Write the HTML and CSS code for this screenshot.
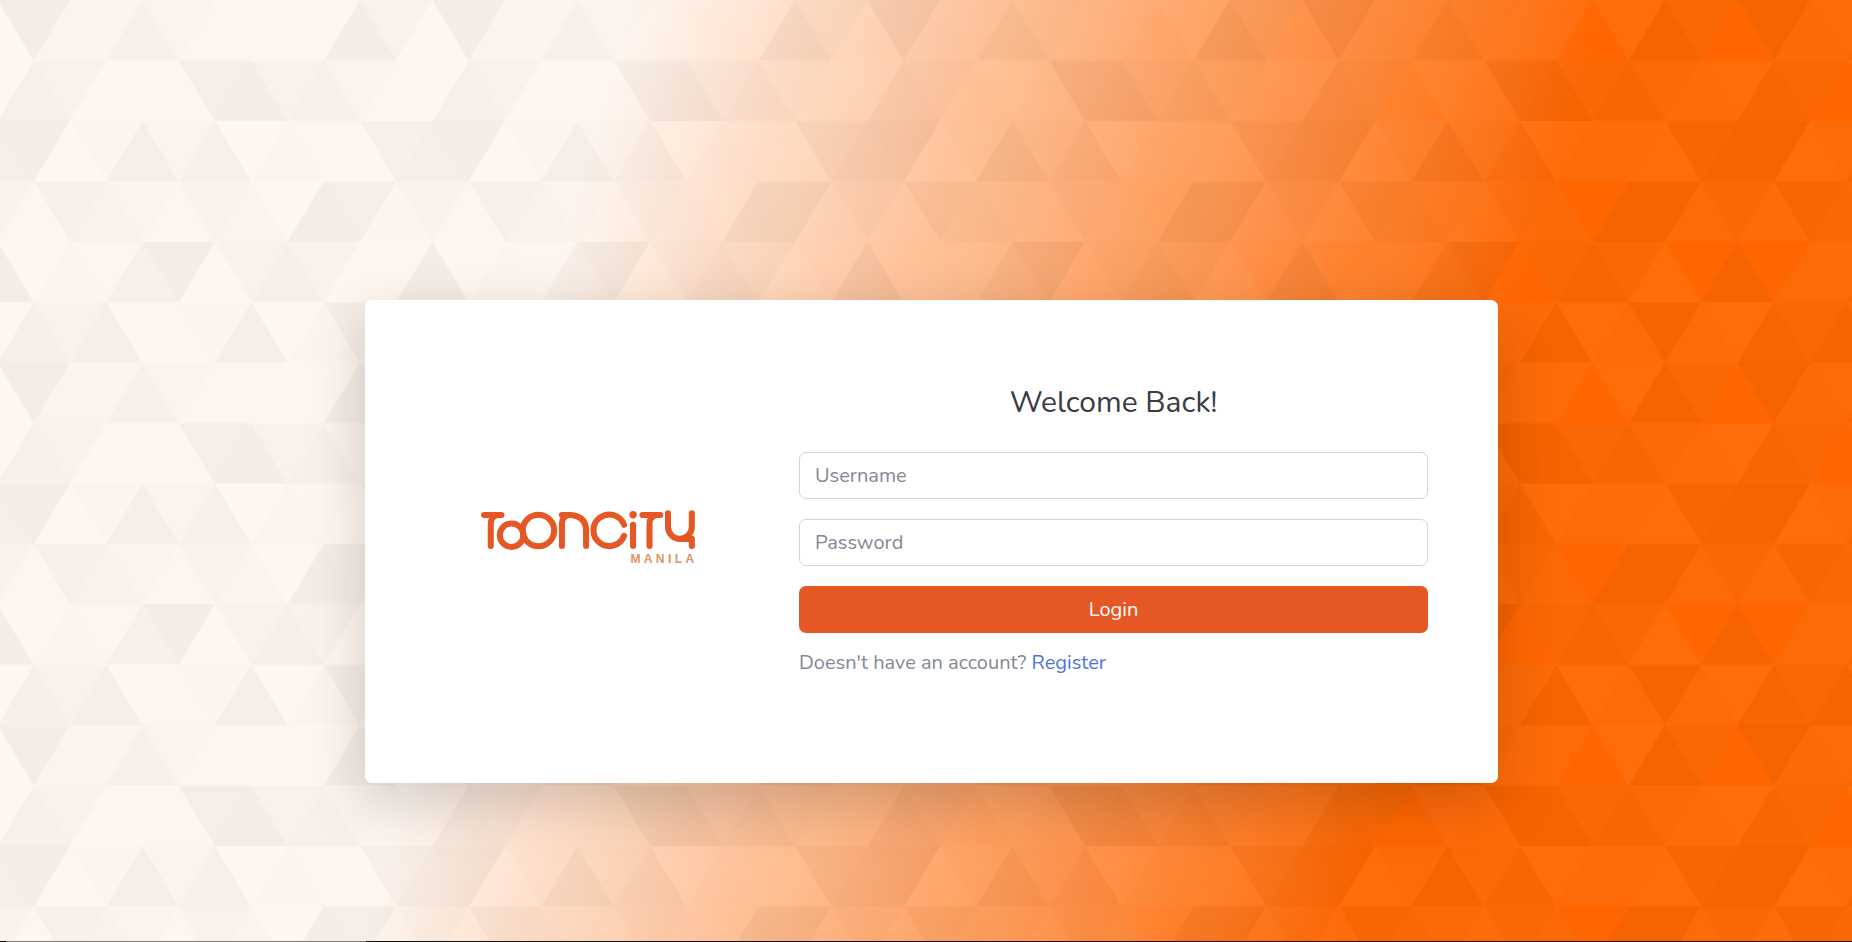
FILE: index.html
```html
<!DOCTYPE html>
<html lang="en">
<head>
<meta charset="utf-8">
<meta name="viewport" content="width=device-width, initial-scale=1">
<title>Tooncity Manila - Login</title>
<link rel="stylesheet" href="styles.css">
</head>
<body>
<svg class="backdrop" aria-hidden="true">
  <defs>
    <pattern id="triangles" x="-2.5" y="0" width="435" height="362.6" patternUnits="userSpaceOnUse"></pattern>
  </defs>
  <rect width="100%" height="100%" fill="url(#triangles)"/>
</svg>
<main class="stage">
  <div class="card">
    <div class="brand">
      <svg class="logo" viewBox="36 32 638 162" role="img" aria-label="Tooncity Manila">
        <g class="logo-lines">
          <path d="M45 47H97M65 139V74Q65 52 84 47"/>
          <circle cx="127" cy="107" r="35"/>
          <circle cx="207" cy="93" r="47"/>
          <path d="M277 47H303Q349 50 349 95V139M277 139V74Q277 54 295 47"/>
          <path d="M462 76A47 47 0 1 0 462 109"/>
          <path d="M489 76V139"/>
          <path d="M517 47H570M538 139V74Q538 52 558 47"/>
          <path d="M593 42V82A36 36 0 0 0 629 118H664V139M629 118A36 36 0 0 0 664 82V42"/>
        </g>
        <circle class="logo-dot" cx="489" cy="46" r="11"/>
        <text class="logo-city" x="481" y="191">MANILA</text>
      </svg>
    </div>
    <form class="login">
      <h1 class="title">Welcome Back!</h1>
      <input class="field" type="text" placeholder="Username" aria-label="Username">
      <input class="field" type="password" placeholder="Password" aria-label="Password">
      <button class="submit" type="submit">Login</button>
      <p class="hint">Doesn't have an account? <a class="link" href="#register">Register</a></p>
    </form>
  </div>
</main>
<div class="baseline"></div>
<script src="pattern.js"></script>
</body>
</html>
```
FILE: pattern.js
```js
// Shade of each triangle, 0 = white to 9 = black, "n" = left empty.
// Every row lists the upward triangles first, then the downward ones.
const rows = [
  ["n361n9", "923105"],
  ["6n1961", "508530"],
  ["808620", "923016"],
  ["151392", "635n85"],
  ["926n70", "n1955n"],
  ["781822", "502080"]
];
const side = 72.5;
const height = 362.6 / 6;
const pattern = document.getElementById("triangles");

function triangle(points, shade) {
  const level = 255 - Math.round(shade * 255 / 9);
  const shape = document.createElementNS("http://www.w3.org/2000/svg", "polygon");
  shape.setAttribute("points", points.join(" "));
  shape.setAttribute("fill", `rgb(${level},${level},${level})`);
  pattern.append(shape);
}

rows.forEach(([up, down], row) => {
  const top = row * height;
  const bottom = top + height;
  const shift = row % 2 ? side / 2 : 0;
  for (let k = -1; k <= 6; k++) {
    const x = k * side + shift;
    const index = (k + 6) % 6;
    if (up[index] !== "n") {
      triangle([x, top, x + side / 2, bottom, x - side / 2, bottom], up[index]);
    }
    if (down[index] !== "n") {
      triangle([x, top, x + side, top, x + side / 2, bottom], down[index]);
    }
  }
});
```
FILE: styles.css
```css
* {
  box-sizing: border-box;
}

body {
  margin: 0;
  min-height: 100vh;
  display: flex;
  flex-direction: column;
  background: linear-gradient(106deg, #fff6ef 30%, #ff6600 76%);
  color: #858796;
  font-family: Nunito, Lato, sans-serif;
  font-size: 20px;
  line-height: 30px;
}

.backdrop {
  position: absolute;
  inset: 0;
  width: 100%;
  height: 100%;
  z-index: -1;
}

.backdrop polygon {
  fill-opacity: 0.04;
}

.stage {
  flex: 1;
  padding: 300px 24px 60px 35px;
}

.card {
  max-width: 1133px;
  margin: 0 auto;
  padding: 85px 70px 105px;
  display: grid;
  grid-template-columns: 306fr 629fr;
  gap: 58px;
  align-items: center;
  background: #fff;
  border-radius: 7px;
  box-shadow: 0 20px 60px rgba(0, 0, 0, 0.175);
}

.brand {
  padding-top: 12px;
  text-align: center;
}

.logo {
  display: block;
  width: 70%;
  margin: 0 auto;
  overflow: visible;
}

.logo-lines {
  fill: none;
  stroke: #e55725;
  stroke-width: 18;
  stroke-linecap: round;
  stroke-linejoin: round;
}

.logo-dot {
  fill: #e55725;
}

.logo-city {
  fill: #dd9468;
  font: bold 36px "Liberation Sans", sans-serif;
  letter-spacing: 10px;
}

.login {
  display: flex;
  flex-direction: column;
  gap: 20px;
}

.title {
  margin: 0 0 11px;
  color: #3a3b45;
  font-size: 30px;
  font-weight: 400;
  line-height: 36px;
  text-align: center;
}

.field {
  width: 100%;
  height: 47px;
  padding: 7px 15px;
  border: 1px solid #d1d3e2;
  border-radius: 7px;
  background: #fff;
  color: #6e707e;
  font: inherit;
}

.field::placeholder {
  color: #858796;
  opacity: 1;
}

.submit {
  height: 47px;
  padding: 0 15px;
  border: 0;
  border-radius: 7px;
  background: #e55725;
  color: #fff;
  font: inherit;
  cursor: pointer;
}

.hint {
  margin: -5px 0 0;
}

.link {
  color: #4e73df;
  text-decoration: none;
}

.baseline {
  height: 1px;
  background: linear-gradient(90deg, #000 6px, #777 6px, #777 366px, #111 366px);
}

@media (max-width: 800px) {
  .stage {
    padding: 48px 24px;
  }

  .card {
    grid-template-columns: 1fr;
    padding: 48px 32px;
  }
}
```
